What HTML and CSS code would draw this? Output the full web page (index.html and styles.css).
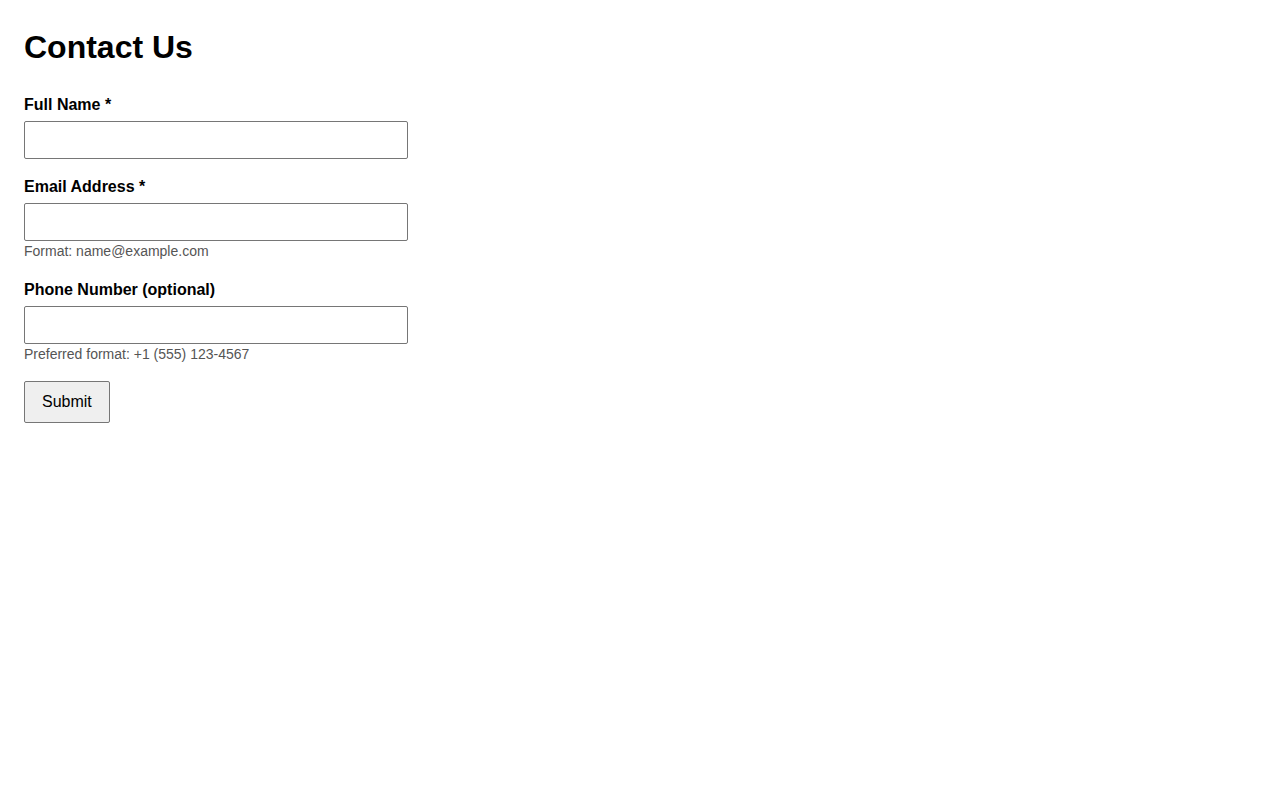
FILE: index.html
```html
<!DOCTYPE html>
<html lang="en">
<head>
<meta charset="utf-8">
<title>Contact Us</title>
<link rel="stylesheet" href="styles.css">
</head>
<body>
<main class="page">
  <h1 class="title">Contact Us</h1>
  <form class="form" onsubmit="return false;">
    <div class="field">
      <label class="label" for="name">Full Name *</label>
      <input class="input" id="name" type="text">
    </div>
    <div class="field">
      <label class="label" for="email">Email Address *</label>
      <input class="input" id="email" type="email">
      <div class="hint">Format: name@example.com</div>
    </div>
    <div class="field field-last">
      <label class="label" for="phone">Phone Number (optional)</label>
      <input class="input" id="phone" type="tel">
      <div class="hint">Preferred format: +1 (555) 123-4567</div>
    </div>
    <button class="submit" type="submit">Submit</button>
  </form>
</main>
</body>
</html>
```

FILE: styles.css
```css
html, body {
  margin: 0;
  padding: 0;
  background: #ffffff;
}
body {
  font-family: "Liberation Sans", Arial, sans-serif;
  font-size: 16px;
  line-height: 1.4;
  color: #000000;
}
.page {
  padding: 25px 24px 24px 24px;
}
.title {
  font-size: 32px;
  font-weight: bold;
  margin: 0 0 24px 0;
}
.form {
  display: flex;
  flex-direction: column;
  align-items: flex-start;
}
.field {
  display: flex;
  flex-direction: column;
  margin-bottom: 17px;
}
.field-last {
  margin-bottom: 16px;
}
.label {
  font-weight: bold;
  font-size: 16px;
  line-height: 22px;
  margin-bottom: 5px;
}
.input {
  box-sizing: border-box;
  width: 384px;
  height: 38px;
  padding: 8px;
  font-family: "Liberation Sans", Arial, sans-serif;
  font-size: 16px;
  border: 1px solid #767676;
  border-radius: 2px;
  background: #ffffff;
  margin: 0;
}
.hint {
  font-size: 14px;
  line-height: 20px;
  color: #555555;
  margin: 0 0 1px 0;
}
.submit {
  box-sizing: border-box;
  height: 42px;
  font-family: "Liberation Sans", Arial, sans-serif;
  font-size: 16px;
  line-height: normal;
  padding: 0 17px;
  background: #efefef;
  color: #000000;
  border: 1px solid #767676;
  border-radius: 2px;
  margin: 0;
}
```
